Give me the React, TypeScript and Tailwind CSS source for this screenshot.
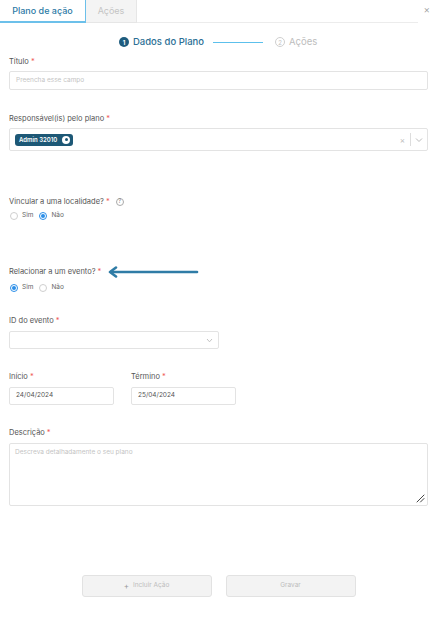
import React from "react";

const Req = () => <span className="text-[#f05a5a] ml-[2px]">*</span>;

function Label({ children, className = "" }: { children: React.ReactNode; className?: string }) {
  return (
    <div className={"h-[10px] flex items-center text-[7.5px] leading-none text-[#555] " + className}>
      {children}
    </div>
  );
}

function Radio({ checked, label }: { checked: boolean; label: string }) {
  return (
    <div className="flex items-center gap-[4px]">
      <span
        className={
          "w-[8px] h-[8px] rounded-full border flex items-center justify-center " +
          (checked ? "border-[#2b8ee8]" : "border-[#cfcfcf]")
        }
      >
        {checked && <span className="w-[4px] h-[4px] rounded-full bg-[#2b8ee8]" />}
      </span>
      <span className="text-[6.5px] text-[#666]">{label}</span>
    </div>
  );
}

export default function App() {
  return (
    <div className="w-[437px] h-[619px] bg-white font-['Inter',sans-serif] overflow-hidden">
      {/* Tabs header */}
      <div className="flex h-[23px] items-stretch">
        <div className="w-[86px] flex items-center justify-center border-b-2 border-r border-[#6cc0ea] text-[9px] font-medium text-[#2d7aa6]">
          Plano de ação
        </div>
        <div className="w-[51px] flex items-center justify-center bg-[#f4f4f4] border-r border-b border-[#e6e6e6] text-[9px] text-[#c4c4c4]">
          Ações
        </div>
        <div className="flex-1 flex">
          <div className="w-[281px] border-b border-[#ececec]" />
          <div className="flex-1 flex items-start justify-end pr-[7px] pt-[2px] text-[10px] font-light text-[#999]">
            ×
          </div>
        </div>
      </div>

      {/* Stepper */}
      <div className="mt-[12px] h-[14px] flex items-center pl-[119px]">
        <span className="w-[10px] h-[10px] rounded-full bg-[#1e5c7e] text-white text-[6px] font-bold flex items-center justify-center">
          1
        </span>
        <span className="ml-[4px] text-[9.5px] font-medium text-[#2c6f95]">Dados do Plano</span>
        <span className="ml-[9px] w-[50px] h-[1px] bg-[#5cc0ec]" />
        <span className="ml-[12px] w-[10px] h-[10px] rounded-full border border-[#cfcfcf] text-[#c4c4c4] text-[6px] flex items-center justify-center">
          2
        </span>
        <span className="ml-[4px] text-[9.5px] text-[#bdbdbd]">Ações</span>
      </div>

      <div className="px-[9px] flex flex-col">
        {/* Título */}
        <Label className="mt-[8px]">
          Título<Req />
        </Label>
        <div className="mt-[4px] h-[19px] w-[419px] border border-[#e3e3e3] rounded-[2px] flex items-center px-[6px] text-[6.5px] text-[#c4c4c4]">
          Preencha esse campo
        </div>

        {/* Responsável */}
        <Label className="mt-[24px]">
          Responsável(is) pelo plano<Req />
        </Label>
        <div className="mt-[4px] h-[23px] w-[419px] border border-[#e3e3e3] rounded-[2px] flex items-center pl-[5px] pr-[4px]">
          <div className="h-[12px] rounded-[3px] bg-[#1d5876] flex items-center pl-[4px] pr-[3px] gap-[5px]">
            <span className="text-[6px] font-semibold text-white">Admin 32010</span>
            <span className="w-[8px] h-[8px] rounded-full bg-white flex items-center justify-center">
              <span className="w-[3px] h-[3px] rounded-full bg-[#1d5876]" />
            </span>
          </div>
          <div className="flex-1" />
          <span className="text-[8px] text-[#bbb]">×</span>
          <span className="ml-[5px] w-[1px] h-[13px] bg-[#ddd]" />
          <svg className="ml-[4px]" width="8" height="6" viewBox="0 0 8 6">
            <path d="M1 1.5 L4 4.5 L7 1.5" fill="none" stroke="#bbb" strokeWidth="1" />
          </svg>
        </div>

        {/* Vincular */}
        <Label className="mt-[46px]">
          Vincular a uma localidade?<Req />
          <span className="ml-[6px] w-[8px] h-[8px] rounded-full border border-[#aaa] text-[5.5px] text-[#888] flex items-center justify-center">
            ?
          </span>
        </Label>
        <div className="mt-[4px] h-[10px] flex items-center gap-[6px] pl-[1px]">
          <Radio checked={false} label="Sim" />
          <Radio checked={true} label="Não" />
        </div>

        {/* Relacionar */}
        <Label className="mt-[46px]">
          Relacionar a um evento?<Req />
          <svg className="ml-[6px]" width="92" height="12" viewBox="0 0 92 12">
            <path d="M4 6 L90 6" stroke="#2f7ca6" strokeWidth="2.6" strokeLinecap="round" />
            <path d="M9 1.5 L3 6 L9 10.5" fill="none" stroke="#2f7ca6" strokeWidth="2.6" strokeLinecap="round" strokeLinejoin="round" />
          </svg>
        </Label>
        <div className="mt-[6px] h-[10px] flex items-center gap-[6px] pl-[1px]">
          <Radio checked={true} label="Sim" />
          <Radio checked={false} label="Não" />
        </div>

        {/* ID do evento */}
        <Label className="mt-[23px]">
          ID do evento<Req />
        </Label>
        <div className="mt-[5px] h-[18px] w-[210px] border border-[#e3e3e3] rounded-[2px] flex items-center justify-end pr-[5px]">
          <svg width="7" height="5" viewBox="0 0 7 5">
            <path d="M1 1 L3.5 3.8 L6 1" fill="none" stroke="#bbb" strokeWidth="0.9" />
          </svg>
        </div>

        {/* Datas */}
        <div className="mt-[23px] flex gap-[17px]">
          <div className="flex flex-col">
            <Label>
              Início<Req />
            </Label>
            <div className="mt-[5px] h-[18px] w-[105px] border border-[#e3e3e3] rounded-[2px] flex items-center px-[6px] text-[6.5px] text-[#555]">
              24/04/2024
            </div>
          </div>
          <div className="flex flex-col">
            <Label>
              Término<Req />
            </Label>
            <div className="mt-[5px] h-[18px] w-[105px] border border-[#e3e3e3] rounded-[2px] flex items-center px-[6px] text-[6.5px] text-[#555]">
              25/04/2024
            </div>
          </div>
        </div>

        {/* Descrição */}
        <Label className="mt-[23px]">
          Descrição<Req />
        </Label>
        <div className="mt-[5px] h-[63px] w-[419px] border border-[#e3e3e3] rounded-[2px] relative px-[5px] pt-[4px] text-[6.5px] text-[#c4c4c4]">
          Descreva detalhadamente o seu plano
          <svg className="absolute right-[2px] bottom-[2px]" width="9" height="9" viewBox="0 0 9 9">
            <path d="M1 8 L8 1 M4.5 8 L8 4.5" stroke="#444" strokeWidth="1" strokeLinecap="round" />
          </svg>
        </div>

        {/* Buttons */}
        <div className="mt-[69px] flex justify-center gap-[14px]">
          <div className="w-[130px] h-[22px] bg-[#f3f3f3] border border-[#e2e2e2] rounded-[3px] flex items-center justify-center gap-[4px] text-[6.5px] text-[#bdbdbd]">
            <span className="text-[#999] text-[8px] leading-none">+</span>
            Incluir Ação
          </div>
          <div className="w-[130px] h-[22px] bg-[#f3f3f3] border border-[#e2e2e2] rounded-[3px] flex items-center justify-center text-[6.5px] text-[#bdbdbd]">
            Gravar
          </div>
        </div>
      </div>
    </div>
  );
}
